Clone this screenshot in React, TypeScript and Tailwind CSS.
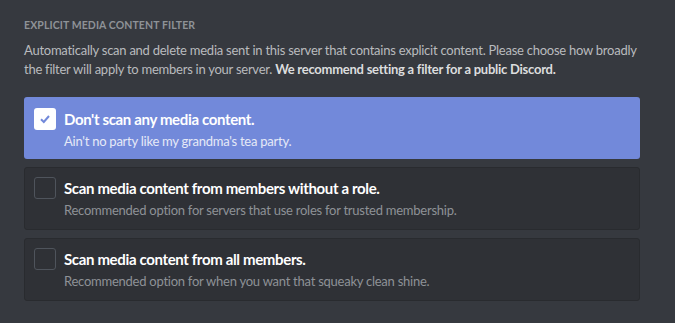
import React from "react";

const options = [
  {
    title: "Don't scan any media content.",
    desc: "Ain't no party like my grandma's tea party.",
    checked: true,
  },
  {
    title: "Scan media content from members without a role.",
    desc: "Recommended option for servers that use roles for trusted membership.",
    checked: false,
  },
  {
    title: "Scan media content from all members.",
    desc: "Recommended option for when you want that squeaky clean shine.",
    checked: false,
  },
];

export default function App() {
  return (
    <div
      className="w-[675px] h-[323px] bg-[#36393f] pl-[24px] pr-[35px] pt-[17px] overflow-hidden"
      style={{ fontFamily: 'Lato, "Open Sans", sans-serif' }}
    >
      <div className="text-[10.5px] leading-[16px] font-bold uppercase tracking-[0.1px] text-[#8e9297]">
        Explicit Media Content Filter
      </div>
      <p className="mt-[8px] text-[13px] leading-[19px] tracking-[-0.25px] text-[#b9bbbe] whitespace-nowrap">
        Automatically scan and delete media sent in this server that contains explicit content. Please choose how broadly
        <br />
        the filter will apply to members in your server.{" "}
        <span className="font-bold text-[#dcddde]">We recommend setting a filter for a public Discord.</span>
      </p>
      <div className="mt-[18px] flex flex-col gap-[8px]">
        {options.map((o) => (
          <div
            key={o.title}
            className={
              o.checked
                ? "h-[62px] rounded-[3px] bg-[#7289da] flex items-start gap-[8px] pl-[10px] pt-[11px]"
                : "h-[63px] rounded-[3px] bg-[#2f3136] border border-[#292b2f] flex items-start gap-[8px] pl-[9px] pt-[9px]"
            }
          >
            {o.checked ? (
              <div className="w-[22px] h-[22px] rounded-[3px] bg-white flex items-center justify-center shrink-0">
                <svg width="14" height="14" viewBox="0 0 14 14">
                  <path d="M3 7.2 L5.8 10 L11 4" fill="none" stroke="#7289da" strokeWidth="2" />
                </svg>
              </div>
            ) : (
              <div className="w-[22px] h-[22px] rounded-[3px] border border-[#4f545c] shrink-0" />
            )}
            <div className="flex flex-col">
              <div className="text-[15px] leading-[22px] font-bold tracking-[-0.35px] text-white">{o.title}</div>
              <div
                className={
                  o.checked
                    ? "text-[13px] leading-[22px] tracking-[-0.25px] text-[#e6e9f7]"
                    : "text-[13px] leading-[22px] tracking-[-0.25px] text-[#8e9297]"
                }
              >
                {o.desc}
              </div>
            </div>
          </div>
        ))}
      </div>
    </div>
  );
}
